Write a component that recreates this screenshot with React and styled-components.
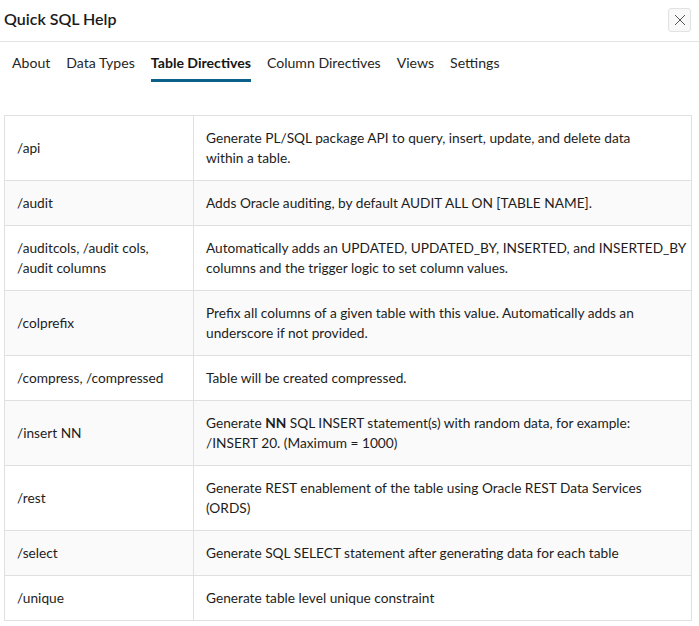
import React from 'react'
import styled, { createGlobalStyle } from 'styled-components'

const GlobalStyle = createGlobalStyle`
  html, body {
    margin: 0;
    padding: 0;
    background: #ffffff;
  }
  body {
    font-family: Lato, "Open Sans", sans-serif;
    color: #1a1a1a;
  }
`

const tabs = ['About', 'Data Types', 'Table Directives', 'Column Directives', 'Views', 'Settings']

const rows = [
  { name: ['/api'], desc: ['Generate PL/SQL package API to query, insert, update, and delete data', 'within a table.'] },
  { name: ['/audit'], desc: ['Adds Oracle auditing, by default AUDIT ALL ON [TABLE NAME].'] },
  {
    name: ['/auditcols, /audit cols,', '/audit columns'],
    desc: ['Automatically adds an UPDATED, UPDATED_BY, INSERTED, and INSERTED_BY', 'columns and the trigger logic to set column values.'],
  },
  { name: ['/colprefix'], desc: ['Prefix all columns of a given table with this value. Automatically adds an', 'underscore if not provided.'] },
  { name: ['/compress, /compressed'], desc: ['Table will be created compressed.'] },
  {
    name: ['/insert NN'],
    desc: [
      <>
        Generate <b>NN</b> SQL INSERT statement(s) with random data, for example:
      </>,
      '/INSERT 20. (Maximum = 1000)',
    ],
  },
  { name: ['/rest'], desc: ['Generate REST enablement of the table using Oracle REST Data Services', '(ORDS)'] },
  { name: ['/select'], desc: ['Generate SQL SELECT statement after generating data for each table'] },
  { name: ['/unique'], desc: ['Generate table level unique constraint'] },
]

const Lines = ({ lines }) =>
  lines.map((line, i) => (
    <React.Fragment key={i}>
      {line}
      {i < lines.length - 1 && <br />}
    </React.Fragment>
  ))

const App = () => {
  return (
    <Dialog>
      <GlobalStyle />
      <Header>
        <Title>Quick SQL Help</Title>
        <CloseButton aria-label="Close">
          <svg width="12" height="12" viewBox="0 0 12 12">
            <path d="M1 1 L11 11 M11 1 L1 11" stroke="#555" strokeWidth="1" fill="none" />
          </svg>
        </CloseButton>
      </Header>
      <TabBar>
        {tabs.map((t) => (
          <Tab key={t} $active={t === 'Table Directives'}>
            {t}
          </Tab>
        ))}
      </TabBar>
      <Body>
        <Table>
          <colgroup>
            <col style={{ width: 189 }} />
            <col />
          </colgroup>
          <tbody>
            {rows.map((r, i) => (
              <Row key={i} $alt={i % 2 === 1}>
                <NameCell>
                  <Lines lines={r.name} />
                </NameCell>
                <DescCell>
                  <Lines lines={r.desc} />
                </DescCell>
              </Row>
            ))}
          </tbody>
        </Table>
      </Body>
    </Dialog>
  )
}

export default App

const Dialog = styled.div`
  width: 699px;
  height: 626px;
  display: flex;
  flex-direction: column;
  overflow: hidden;
`

const Header = styled.div`
  height: 42px;
  box-sizing: border-box;
  border-bottom: 1px solid #e3e3e3;
  display: flex;
  align-items: center;
  justify-content: space-between;
  padding: 0 8px 0 4px;
`

const Title = styled.div`
  font-size: 16px;
  font-weight: 600;
  color: #1a1a1a;
  margin-top: -5px;
`

const CloseButton = styled.button`
  width: 23px;
  height: 24px;
  margin-top: -1px;
  padding: 0;
  display: flex;
  align-items: center;
  justify-content: center;
  background: #f8f8f8;
  border: 1px solid #e2e2e2;
  border-radius: 3px;
`

const TabBar = styled.div`
  display: flex;
  padding: 0 4px;
  margin-top: 8px;
`

const Tab = styled.div`
  font-size: 14.1px;
  padding: 4px 8px 0;
  height: 32px;
  box-sizing: border-box;
  color: ${(p) => (p.$active ? '#161616' : '#262626')};
  font-weight: ${(p) => (p.$active ? 700 : 400)};
  position: relative;
  &::after {
    content: '';
    display: ${(p) => (p.$active ? 'block' : 'none')};
    position: absolute;
    left: 8px;
    right: 8px;
    bottom: 0;
    height: 3px;
    background: #0b6089;
  }
`

const Body = styled.div`
  padding: 33px 7px 0 4px;
`

const Table = styled.table`
  width: 688px;
  table-layout: fixed;
  border-collapse: collapse;
  font-size: 13.7px;
  line-height: 20px;
  color: #1d1d1d;
  border: 1px solid #e0e0e0;
`

const Row = styled.tr`
  background: ${(p) => (p.$alt ? '#fafafa' : '#ffffff')};
`

const NameCell = styled.td`
  padding: 12px 12px;
  border: 1px solid #e0e0e0;
  vertical-align: middle;
  white-space: nowrap;
`

const DescCell = styled.td`
  padding: 12px 12px;
  border: 1px solid #e0e0e0;
  vertical-align: middle;
  white-space: nowrap;
`
